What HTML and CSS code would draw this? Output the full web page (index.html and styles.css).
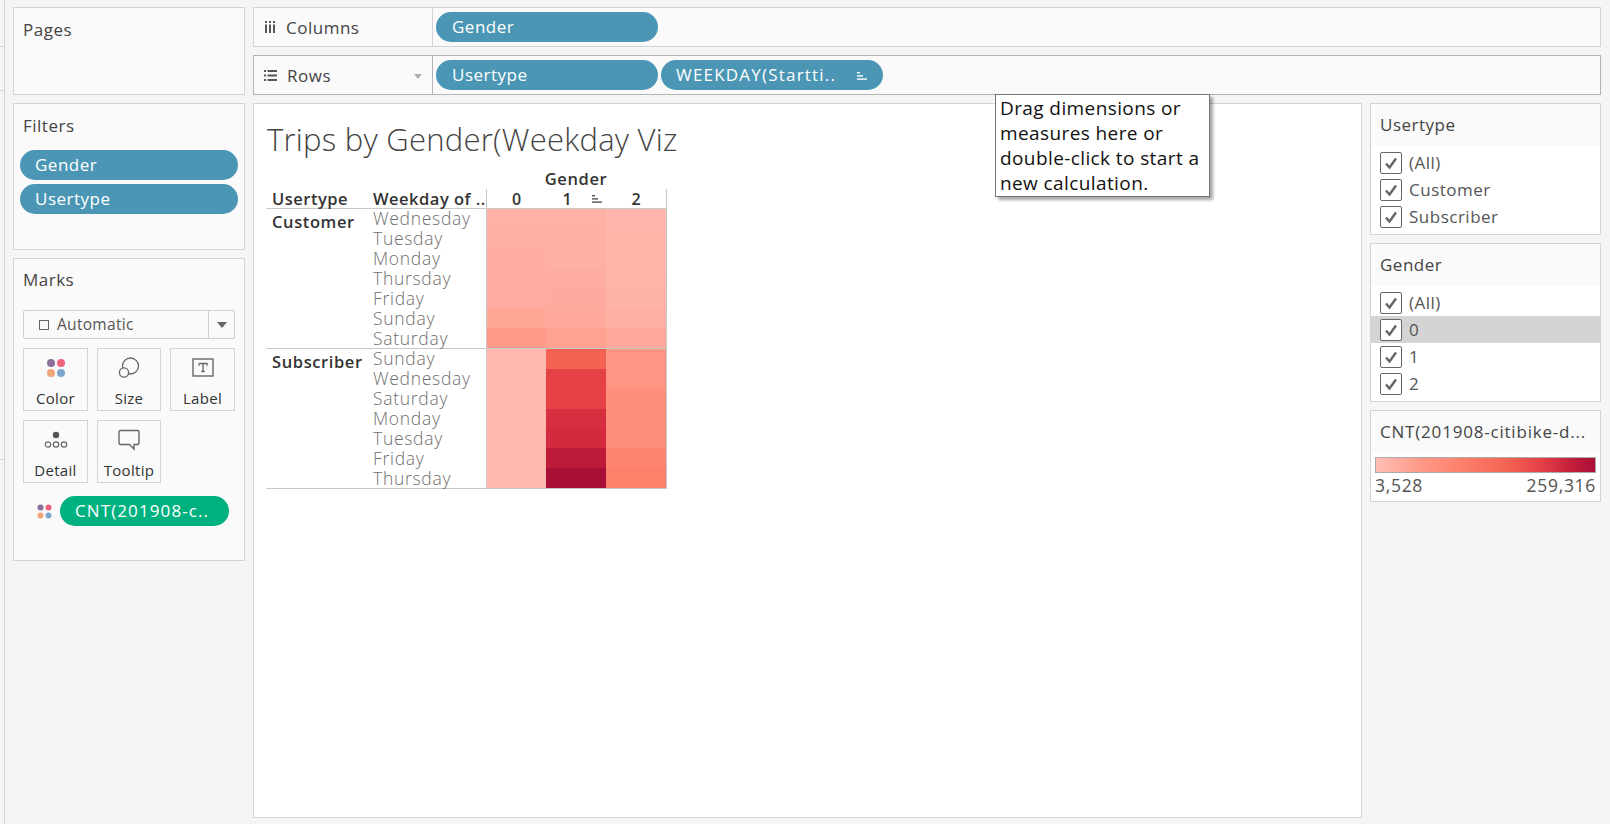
FILE: index.html
```html
<!DOCTYPE html>
<html lang="en">
<head>
<meta charset="utf-8">
<title>Trips by Gender</title>
<link rel="stylesheet" href="styles.css">
</head>
<body>
<div class="edge"><i></i><i></i><i></i></div>
<div class="app">
  <aside class="left">
    <section class="card pages"><h2>Pages</h2></section>
    <section class="card filters">
      <h2>Filters</h2>
      <div class="pill blue wide">Gender</div>
      <div class="pill blue wide">Usertype</div>
    </section>
    <section class="card marks">
      <h2>Marks</h2>
      <div class="select">
        <span class="sq"></span><span class="sel-text">Automatic</span>
        <span class="sel-arrow"><b></b></span>
      </div>
      <div class="mgrid">
        <div class="mbtn">
          <svg width="20" height="20" viewBox="0 0 20 20"><circle cx="5" cy="5" r="4" fill="#8a6f9c"/><circle cx="15" cy="5" r="4" fill="#f0637f"/><circle cx="5" cy="15" r="4" fill="#f2a578"/><circle cx="15" cy="15" r="4" fill="#7ea6cf"/></svg>
          <span>Color</span>
        </div>
        <div class="mbtn">
          <svg width="22" height="22" viewBox="0 0 22 22" fill="none" stroke="#666" stroke-width="1.3"><circle cx="12.5" cy="9" r="8"/><circle cx="6" cy="15.5" r="4.6" fill="#fafafa"/></svg>
          <span>Size</span>
        </div>
        <div class="mbtn">
          <svg width="22" height="20" viewBox="0 0 22 20"><rect x="1" y="1" width="20" height="17" fill="none" stroke="#666" stroke-width="1.4"/><path d="M7 5.5h8v2.2M7 7.700v-2.200M11 5.500v8M9.300 13.500h3.400" fill="none" stroke="#666" stroke-width="1.300"/></svg>
          <span>Label</span>
        </div>
        <div class="mbtn">
          <svg width="24" height="20" viewBox="0 0 24 20" fill="none" stroke="#666" stroke-width="1.200"><circle cx="12" cy="5" r="3.200" fill="#555" stroke="none"/><circle cx="4" cy="14.500" r="2.700"/><circle cx="12" cy="14.500" r="2.700"/><circle cx="20" cy="14.500" r="2.700"/></svg>
          <span>Detail</span>
        </div>
        <div class="mbtn">
          <svg width="22" height="21" viewBox="0 0 22 21" fill="none" stroke="#666" stroke-width="1.400"><path d="M2.500 1h17a1.500 1.500 0 0 1 1.500 1.500v11a1.500 1.500 0 0 1-1.500 1.500H16v4.500L11.500 15H2.500A1.500 1.500 0 0 1 1 13.500v-11A1.500 1.500 0 0 1 2.500 1z"/></svg>
          <span>Tooltip</span>
        </div>
      </div>
      <div class="mfield">
        <svg width="15" height="15" viewBox="0 0 15 15"><circle cx="3.500" cy="3.500" r="3" fill="#8a6f9c"/><circle cx="11.500" cy="3.500" r="3" fill="#f0637f"/><circle cx="3.500" cy="11.500" r="3" fill="#f2a578"/><circle cx="11.500" cy="11.500" r="3" fill="#7ea6cf"/></svg>
        <div class="pill green">CNT(201908-c..</div>
      </div>
    </section>
  </aside>

  <main class="center">
    <div class="shelf">
      <div class="shelf-label">
        <svg class="shelf-icon" width="12" height="12" viewBox="0 0 12 12" fill="#555"><rect x="1" y="0" width="2" height="2"/><rect x="5" y="0" width="2" height="2"/><rect x="9" y="0" width="2" height="2"/><rect x="1" y="3.500" width="2" height="8.500"/><rect x="5" y="3.500" width="2" height="8.500"/><rect x="9" y="3.500" width="2" height="8.500"/></svg>
        <span>Columns</span>
      </div>
      <div class="shelf-pills"><div class="pill blue fixed">Gender</div></div>
    </div>
    <div class="shelf active">
      <div class="shelf-label">
        <svg class="shelf-icon" width="13" height="11" viewBox="0 0 13 11" fill="#555"><rect x="0" y="0" width="2" height="2"/><rect x="3.500" y="0" width="9.500" height="2"/><rect x="0" y="4.500" width="2" height="2"/><rect x="3.500" y="4.500" width="9.500" height="2"/><rect x="0" y="9" width="2" height="2"/><rect x="3.500" y="9" width="9.500" height="2"/></svg>
        <span>Rows</span>
        <b class="shelf-arrow"></b>
      </div>
      <div class="shelf-pills">
        <div class="pill blue fixed">Usertype</div>
        <div class="pill blue sorted">WEEKDAY(Startti..
          <svg class="sort-ic" width="10" height="8" viewBox="0 0 10 8" fill="#fff"><rect x="0" y="0" width="3" height="1.400"/><rect x="0" y="3.200" width="6" height="1.400"/><rect x="0" y="6.400" width="10" height="1.400"/></svg>
        </div>
      </div>
    </div>
    <div class="viz-row">
      <div class="viz">
        <h1>Trips by Gender(Weekday Viz</h1>
        <div class="table">
          <div class="top-row"><span class="gender-h">Gender</span></div>
          <div class="head-row">
            <span class="hc c1">Usertype</span>
            <span class="hc c2">Weekday of ..</span>
            <span class="hc num">0</span>
            <span class="hc num one">1<svg class="sort-h" width="10" height="8" viewBox="0 0 10 8" fill="#555"><rect x="0" y="0" width="3" height="1.400"/><rect x="0" y="3.200" width="6" height="1.400"/><rect x="0" y="6.400" width="10" height="1.400"/></svg></span>
            <span class="hc num">2</span>
          </div>
          <div class="pane">
            <div class="ut">Customer</div>
            <div class="days"><span>Wednesday</span><span>Tuesday</span><span>Monday</span><span>Thursday</span><span>Friday</span><span>Sunday</span><span>Saturday</span></div>
            <div class="cells">
              <i style="background:#ffb1a6"></i><i style="background:#ffb1a6"></i><i style="background:#ffb6ac"></i>
              <i style="background:#ffafa4"></i><i style="background:#ffafa4"></i><i style="background:#ffb5aa"></i>
              <i style="background:#ffada2"></i><i style="background:#ffafa4"></i><i style="background:#ffb5aa"></i>
              <i style="background:#ffada2"></i><i style="background:#ffaca1"></i><i style="background:#ffb4a9"></i>
              <i style="background:#ffaca0"></i><i style="background:#ffaa9e"></i><i style="background:#ffb3a8"></i>
              <i style="background:#ffa697"></i><i style="background:#ffa99c"></i><i style="background:#ffb0a5"></i>
              <i style="background:#ff9a88"></i><i style="background:#ffa291"></i><i style="background:#ffaa9d"></i>
            </div>
          </div>
          <div class="pane">
            <div class="ut">Subscriber</div>
            <div class="days"><span>Sunday</span><span>Wednesday</span><span>Saturday</span><span>Monday</span><span>Tuesday</span><span>Friday</span><span>Thursday</span></div>
            <div class="cells">
              <i style="background:#ffb9af"></i><i style="background:#f46352"></i><i style="background:#ff9684"></i>
              <i style="background:#ffb9af"></i><i style="background:#e54147"></i><i style="background:#ff9582"></i>
              <i style="background:#ffb9af"></i><i style="background:#e54147"></i><i style="background:#ff8e7b"></i>
              <i style="background:#ffb9af"></i><i style="background:#d72e40"></i><i style="background:#ff8e7b"></i>
              <i style="background:#ffb9af"></i><i style="background:#d4293e"></i><i style="background:#ff8f7c"></i>
              <i style="background:#ffb9af"></i><i style="background:#bd1a3a"></i><i style="background:#fe8671"></i>
              <i style="background:#ffb9af"></i><i style="background:#aa0f37"></i><i style="background:#fd806b"></i>
            </div>
          </div>
        </div>
      </div>
      <aside class="right">
        <section class="rcard">
          <h3>Usertype</h3>
          <div class="rbody">
            <div class="check"><span class="box"><svg width="16" height="16" viewBox="0 0 16 16"><path d="M3 8.500l3.500 4L13 3.500" fill="none" stroke="#666" stroke-width="2.400"/></svg></span>(All)</div>
            <div class="check"><span class="box"><svg width="16" height="16" viewBox="0 0 16 16"><path d="M3 8.500l3.500 4L13 3.500" fill="none" stroke="#666" stroke-width="2.400"/></svg></span>Customer</div>
            <div class="check"><span class="box"><svg width="16" height="16" viewBox="0 0 16 16"><path d="M3 8.500l3.500 4L13 3.500" fill="none" stroke="#666" stroke-width="2.400"/></svg></span>Subscriber</div>
          </div>
        </section>
        <section class="rcard">
          <h3>Gender</h3>
          <div class="rbody">
            <div class="check"><span class="box"><svg width="16" height="16" viewBox="0 0 16 16"><path d="M3 8.500l3.500 4L13 3.500" fill="none" stroke="#666" stroke-width="2.400"/></svg></span>(All)</div>
            <div class="check hl"><span class="box"><svg width="16" height="16" viewBox="0 0 16 16"><path d="M3 8.500l3.500 4L13 3.500" fill="none" stroke="#666" stroke-width="2.400"/></svg></span>0</div>
            <div class="check"><span class="box"><svg width="16" height="16" viewBox="0 0 16 16"><path d="M3 8.500l3.500 4L13 3.500" fill="none" stroke="#666" stroke-width="2.400"/></svg></span>1</div>
            <div class="check"><span class="box"><svg width="16" height="16" viewBox="0 0 16 16"><path d="M3 8.500l3.500 4L13 3.500" fill="none" stroke="#666" stroke-width="2.400"/></svg></span>2</div>
          </div>
        </section>
        <section class="rcard legend">
          <h3>CNT(201908-citibike-d...</h3>
          <div class="lbody">
            <div class="ramp"></div>
            <div class="lvals"><span>3,528</span><span>259,316</span></div>
          </div>
        </section>
      </aside>
    </div>
    <div class="tip">Drag dimensions or<br>measures here or<br>double-click to start a<br>new calculation.</div>
  </main>
</div>
</body>
</html>
```
FILE: styles.css
```css
* { box-sizing: border-box; }
html, body { margin: 0; height: 824px; overflow: hidden; }
body {
  background: #f5f5f5;
  font-family: "Open Sans", "Liberation Sans", sans-serif;
  color: #333;
  font-size: 17px;
  letter-spacing: .5px;
  position: relative;
}
.edge { position: absolute; left: 0; top: 0; width: 5px; height: 824px; border-right: 1px solid #d4d4d4; }
.edge i { position: absolute; left: 0; width: 4px; height: 1px; background: #d4d4d4; }
.edge i:nth-child(1) { top: 46px; }
.edge i:nth-child(2) { top: 90px; }
.edge i:nth-child(3) { top: 459px; }

.app { display: flex; gap: 8px; padding: 7px 9px 6px 13px; height: 824px; }
.left { width: 232px; display: flex; flex-direction: column; gap: 8px; flex: none; }
.center { flex: 1; display: flex; flex-direction: column; gap: 8px; position: relative; min-width: 0; }

.card { background: #fafafa; border: 1px solid #d4d4d4; padding: 0 6px; }
.card h2 { margin: 0; font-size: 17px; font-weight: 400; padding: 12px 3px 0; line-height: 20px; color: #444; }
.pages { height: 88px; }
.filters { height: 147px; }
.filters h2 { height: 46px; padding-top: 12px; }
.marks { height: 303px; }
.marks h2 { height: 51px; padding-top: 11px; }

.pill {
  height: 30px; line-height: 30px; border-radius: 15px; color: #fff; font-size: 17px;
  padding: 0 16px; white-space: nowrap;
}
.blue { background: #4a96b4; }
.green { background: #00b180; width: 169px; padding: 0 15px; letter-spacing: 1.1px; }
.wide + .wide { margin-top: 4px; }
.filters .wide { width: 218px; padding: 0 15px; }

.select {
  height: 29px; border: 1px solid #d0d0d0; border-radius: 2px; background: #fafafa;
  display: flex; align-items: center; margin: 0 3px; font-size: 15.500px; letter-spacing: .3px; color: #555; padding-left: 15px;
}
.sq { width: 10px; height: 10px; border: 1px solid #666; margin-right: 8px; flex: none; }
.sel-text { flex: 1; line-height: 24px; padding-bottom: 2px; }
.sel-arrow { width: 26px; height: 100%; border-left: 1px solid #d0d0d0; display: flex; align-items: center; justify-content: center; }
.sel-arrow b { border: 5px solid transparent; border-top: 6px solid #666; border-bottom: 0; }

.mgrid { display: grid; grid-template-columns: 65px 64px 65px; column-gap: 9px; row-gap: 9px; margin: 9px 3px 0; }
.mbtn {
  height: 63px; border: 1px solid #d4d4d4; display: flex; flex-direction: column; align-items: center;
  justify-content: flex-start; padding-top: 8px; font-size: 15px; letter-spacing: .3px; color: #333; background: #fafafa; position: relative;
}
.mbtn svg { height: 22px; }
.mbtn span { position: absolute; top: 39px; line-height: 20px; }

.mfield { display: flex; align-items: center; gap: 8px; margin: 13px 0 0 17px; }

.shelf { height: 40px; background: #fafafa; border: 1px solid #d4d4d4; display: flex; }
.shelf.active { border-color: #b4b4b4; }
.shelf-label { width: 179px; border-right: 1px solid #d4d4d4; display: flex; align-items: center; padding-left: 10px; font-size: 17px; color: #444; position: relative; }
.active .shelf-label { border-right-color: #b4b4b4; }
.shelf-icon { margin-right: 10px; flex: none; }
.shelf-arrow { position: absolute; right: 10px; top: 18px; border: 4px solid transparent; border-top: 5px solid #b0b0b0; border-bottom: 0; }
.shelf-pills { display: flex; gap: 3px; padding: 4px 2px 4px 3px; align-items: center; }
.fixed { width: 222px; }
.sorted { width: 222px; position: relative; letter-spacing: 1.2px; padding-left: 15px; }
.sort-ic { position: absolute; right: 16px; top: 12px; }

.viz-row { flex: 1; display: flex; gap: 8px; min-height: 0; }
.viz { width: 1109px; background: #fff; border: 1px solid #d4d4d4; padding: 0 0 0 12px; }
.viz h1 { margin: 0; font-weight: 300; font-size: 31px; letter-spacing: .25px; line-height: 38px; padding: 16px 0 0 1px; height: 65px; color: #444; white-space: nowrap; }

.table { width: 401px; font-size: 16px; }
.top-row { display: flex; height: 20px; padding-left: 220px; }
.gender-h { width: 180px; text-align: center; line-height: 20px; font-weight: 600; font-size: 16.500px; letter-spacing: .6px; }
.head-row { display: grid; grid-template-columns: 107px 113px 60px 60px 61px; height: 20px; border-bottom: 1px solid #c8c8c8; line-height: 20px; }
.hc { font-weight: 600; font-size: 16.500px; letter-spacing: .5px; white-space: nowrap; }
.c1 { padding-left: 6px; }
.num { text-align: center; font-size: 16px; letter-spacing: 0; position: relative; }
.one { padding-right: 18px; }
.c2 + .num { border-left: 1px solid #c8c8c8; }
.num:last-child { border-right: 1px solid #c8c8c8; }
.sort-h { position: absolute; right: 4px; top: 6px; }

.pane { display: grid; grid-template-columns: 107px 113px 181px; height: 140px; border-bottom: 1px solid #c8c8c8; }
.ut { font-weight: 600; font-size: 16.500px; letter-spacing: .6px; padding-left: 6px; line-height: 20px; padding-top: 3px; white-space: nowrap; }
.days { display: flex; flex-direction: column; font-size: 17.500px; letter-spacing: .7px; font-weight: 300; color: #6e6e6e; margin-top: -1px; }
.days span { height: 20px; line-height: 20px; flex: none; }
.cells { display: grid; grid-template-columns: 59px 60px 60px; grid-auto-rows: 1fr; border-left: 1px solid #c8c8c8; border-right: 1px solid #c8c8c8; }
.cells i { display: block; }

.right { width: 231px; flex: none; display: flex; flex-direction: column; gap: 8px; }
.rcard { border: 1px solid #d4d4d4; background: #fafafa; }
.rcard h3 { margin: 0; font-weight: 400; font-size: 17px; height: 42px; line-height: 42px; padding-left: 9px; color: #444; white-space: nowrap; }
.legend h3 { letter-spacing: .8px; }
.rbody { background: #fff; padding: 3px 0 4px; }
.check { height: 27px; display: flex; align-items: center; font-size: 17px; padding-left: 9px; color: #555; }
.check.hl { background: #d4d4d4; }
.box { width: 22px; height: 22px; border: 1px solid #666; border-radius: 2px; margin-right: 7px; display: flex; align-items: center; justify-content: center; background: #fff; }
.legend { height: 92px; }
.lbody { background: #fff; height: 48px; padding: 4px 4px 0; }
.ramp { height: 16px; border: 1px solid #aaa; background: linear-gradient(to right, #ffbfb6, #ff9a88 20%, #fb7f6b 40%, #f46352 60%, #e54147 75%, #c21d3b 90%, #aa0f37); }
.lvals { display: flex; justify-content: space-between; font-size: 17.500px; letter-spacing: .7px; line-height: 24px; color: #555; }

.tip {
  position: absolute; left: 742px; top: 87px; width: 215px; height: 103px;
  background: #fff; border: 1px solid #767676; box-shadow: 3px 3px 3px rgba(0,0,0,.35);
  padding: 1px 4px; font-size: 19px; letter-spacing: .4px; line-height: 25px; color: #111; z-index: 5; white-space: nowrap;
}
```
